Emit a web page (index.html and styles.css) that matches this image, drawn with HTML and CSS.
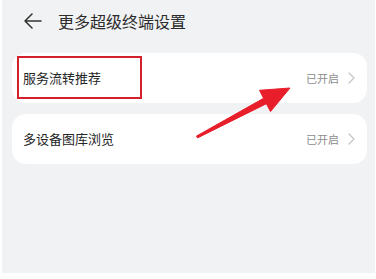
FILE: index.html
```html
<!DOCTYPE html>
<html lang="zh">
<head>
<meta charset="utf-8">
<link rel="stylesheet" href="styles.css">
</head>
<body>
<div class="screen">
  <div class="header">
    <svg class="back" width="18" height="16" viewBox="0 0 18 16">
      <path d="M8 1 L1 8 L8 15 M1 8 L17 8" fill="none" stroke="#333" stroke-width="1.5" stroke-linecap="round" stroke-linejoin="round"/>
    </svg>
    <div class="title">更多超级终端设置</div>
  </div>
  <div class="list">
    <div class="card">
      <div class="label">服务流转推荐</div>
      <div class="status">已开启</div>
      <svg class="chev" width="7" height="12" viewBox="0 0 7 12"><path d="M1 1 L6 6 L1 11" fill="none" stroke="#c4c4c4" stroke-width="1.2" stroke-linecap="round" stroke-linejoin="round"/></svg>
    </div>
    <div class="card">
      <div class="label">多设备图库浏览</div>
      <div class="status">已开启</div>
      <svg class="chev" width="7" height="12" viewBox="0 0 7 12"><path d="M1 1 L6 6 L1 11" fill="none" stroke="#c4c4c4" stroke-width="1.2" stroke-linecap="round" stroke-linejoin="round"/></svg>
    </div>
  </div>
  <div class="highlight"></div>
  <svg class="arrow" width="376" height="279" viewBox="0 0 376 279">
    <polygon points="290,88 259.5,90.3 263.6,98.3 196.5,136.1 197.5,137.9 266.4,103.7 270.5,111.6" fill="#e81e2a" stroke="#e81e2a" stroke-width="1" stroke-linejoin="round"/>
  </svg>
</div>
</body>
</html>
```
FILE: styles.css
```css
html, body {
  margin: 0;
  padding: 0;
  background: #ffffff;
}
.screen {
  position: relative;
  margin-left: 2px;
  width: 373px;
  height: 273px;
  background: #f1f2f4;
  font-family: "Noto Sans CJK SC", "Noto Sans", sans-serif;
  overflow: hidden;
}
.header {
  display: flex;
  align-items: center;
  height: 42px;
  padding-left: 22px;
}
.back {
  display: block;
  margin-right: 16px;
}
.title {
  font-size: 16px;
  color: #2b2b2b;
  letter-spacing: 0px;
  line-height: 20px;
}
.list {
  display: flex;
  flex-direction: column;
  gap: 11px;
  padding: 11px 8px 0 10px;
}
.card {
  display: flex;
  align-items: center;
  height: 50px;
  background: #ffffff;
  border-radius: 14px;
  padding: 0 12px 0 11px;
}
.label {
  flex: 1;
  font-size: 13px;
  color: #262626;
  line-height: 16px;
}
.status {
  font-size: 11px;
  color: #8c8c8c;
  margin-right: 9px;
  line-height: 14px;
}
.chev {
  display: block;
}
.highlight {
  position: absolute;
  left: 15px;
  top: 56px;
  width: 121px;
  height: 39px;
  border: 2px solid #d4202c;
}
.arrow {
  position: absolute;
  left: -2px;
  top: 0;
}
```
